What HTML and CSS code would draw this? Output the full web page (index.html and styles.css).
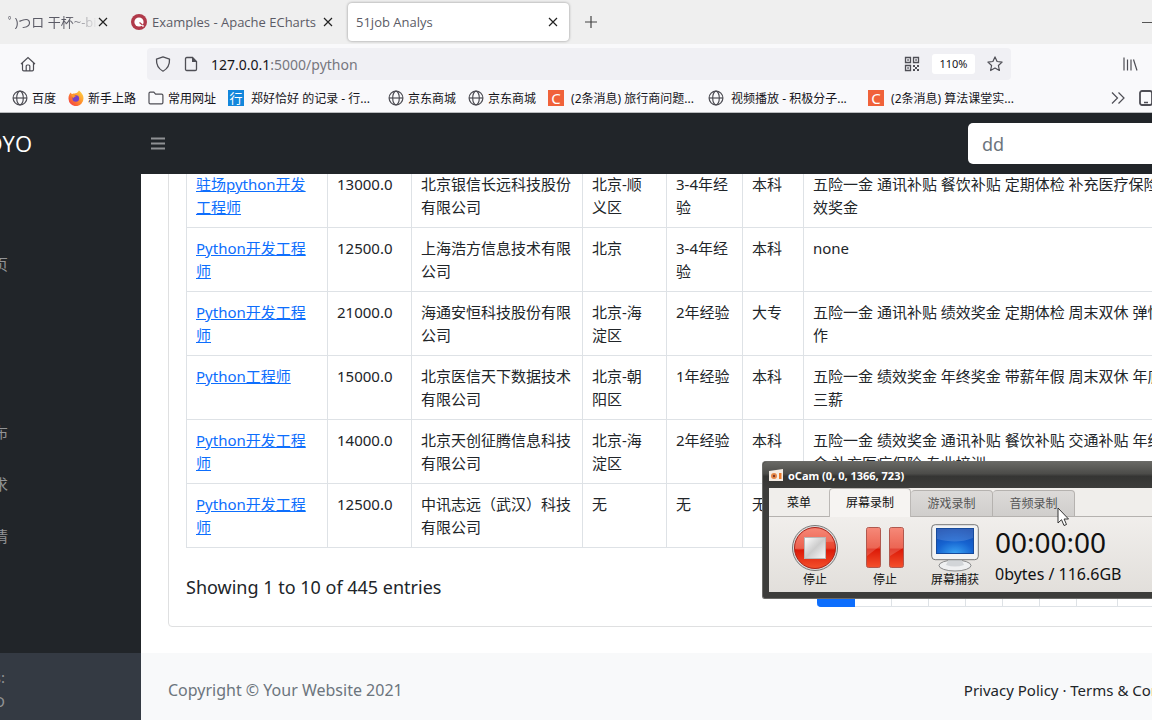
FILE: index.html
```html
<!DOCTYPE html>
<html lang="zh-CN">
<head>
<meta charset="utf-8">
<meta name="viewport" content="width=device-width, initial-scale=1">
<title>51job Analys</title>
<link rel="stylesheet" href="styles.css">
</head>
<body>
<svg class="defs" aria-hidden="true">
  <symbol id="globe" viewBox="0 0 16 16"><g fill="none" stroke="#4e4e55" stroke-width="1.2"><circle cx="8" cy="8" r="6.9"/><ellipse cx="8" cy="8" rx="3.3" ry="6.9"/><path d="M1 8h14"/></g></symbol>
  <symbol id="close" viewBox="0 0 10 10"><path d="M1 1l8 8M9 1L1 9" fill="none" stroke="#222" stroke-width="1.2"/></symbol>
  <linearGradient id="red" x1="0" y1="0" x2="0" y2="1"><stop offset="0" stop-color="#f4705c"/><stop offset=".5" stop-color="#e8452f"/><stop offset=".55" stop-color="#dc1a08"/><stop offset="1" stop-color="#f4502c"/></linearGradient>
  <linearGradient id="steel" x1="0" y1="0" x2="1" y2="1"><stop offset="0" stop-color="#fff"/><stop offset=".5" stop-color="#ccc"/><stop offset="1" stop-color="#fafafa"/></linearGradient>
  <radialGradient id="screen" cx=".5" cy="1" r="1"><stop offset="0" stop-color="#3aa4f4"/><stop offset=".5" stop-color="#1663d0"/><stop offset="1" stop-color="#1048b0"/></radialGradient>
  <linearGradient id="fire" x1="1" y1="0" x2="0" y2="1"><stop offset="0" stop-color="#ffe04a"/><stop offset=".5" stop-color="#ff8a2a"/><stop offset="1" stop-color="#f0304c"/></linearGradient>
</svg>

<header class="browser">
  <div class="tabs">
    <div class="tab tab-first"><span class="tab-title fade">ﾟ)つロ 干杯~-bil</span><button class="x" aria-label="关闭"><svg><use href="#close"/></svg></button></div>
    <div class="tab tab-mid">
      <svg class="ico" viewBox="0 0 16 16"><circle cx="8" cy="8" r="8" fill="#b03a4a"/><circle cx="8" cy="8" r="4.600" fill="#fff"/><path d="M8 8l4.500 4.500" stroke="#fff" stroke-width="1.600"/><path d="M8.500 8.500l3 2.500" stroke="#b03a4a" stroke-width="1.200"/></svg>
      <span class="tab-title">Examples - Apache ECharts</span><button class="x" aria-label="关闭"><svg><use href="#close"/></svg></button></div>
    <div class="tab tab-active"><span class="tab-title">51job Analys</span><button class="x" aria-label="关闭"><svg><use href="#close"/></svg></button></div>
    <button class="newtab" aria-label="新标签页"><svg viewBox="0 0 12 12"><path d="M6 0v12M0 6h12" stroke="#444" stroke-width="1.2"/></svg></button>
    <button class="minimize" aria-label="最小化"></button>
  </div>
  <div class="toolbar">
    <button class="home" aria-label="主页"><svg class="ico" viewBox="0 0 16 16"><path d="M1 8l7-6.500L15 8M2.500 7v6.500c0 .8.5 1.300 1.300 1.300h8.400c.8 0 1.300-.5 1.300-1.300V7M6.200 14.500V10c0-.6.4-1 1-1h1.600c.6 0 1 .4 1 1v4.500" fill="none" stroke="#4e4e55" stroke-width="1.2"/></svg></button>
    <div class="urlbar">
      <svg class="ico" viewBox="0 0 16 16"><path d="M8 .8l6.500 2.300c.3 5.500-1.300 9.300-6.500 12.100C2.800 12.400 1.200 8.600 1.500 3.100z" fill="none" stroke="#4e4e55" stroke-width="1.3" stroke-linejoin="round"/></svg>
      <svg class="ico" viewBox="0 0 16 16"><path d="M3.800 1.500h5.700l4 4v7.700c0 .8-.5 1.300-1.300 1.300H3.800c-.8 0-1.300-.5-1.300-1.300V2.800c0-.8.5-1.300 1.300-1.300z" fill="none" stroke="#4e4e55" stroke-width="1.300"/><path d="M9 1v5h5z" fill="#4e4e55"/></svg>
      <span class="url">127.0.0.1<span class="path">:5000/python</span></span>
      <svg class="ico push" viewBox="0 0 16 16"><g fill="none" stroke="#4e4e55" stroke-width="1.300"><path d="M1.500 1.500h5v5h-5zM9.500 1.500h5v5h-5zM1.500 9.500h5v5h-5z"/></g><path fill="#4e4e55" d="M3.300 3.300h1.500v1.500H3.300zM11.300 3.300h1.500v1.500h-1.500zM3.300 11.300h1.500v1.500H3.300zM9 9h2v2H9zM13 9h2v2h-2zM11 11h2v2h-2zM9 13h2v2H9zM13 13h2v2h-2z"/></svg>
      <button class="zoom">110%</button>
      <svg class="ico" viewBox="0 0 16 16"><path d="M8 .9l2.100 4.600 5 .6-3.700 3.400 1 5L8 12l-4.400 2.500 1-5L.9 6.100l5-.6z" fill="none" stroke="#4e4e55" stroke-width="1.200" stroke-linejoin="round"/></svg>
    </div>
    <button class="library" aria-label="书库"><svg class="ico" viewBox="0 0 16 16"><path d="M2 1.500v13M5.500 3.500v11M9 3.500v11M11.500 3.500l3.500 11" fill="none" stroke="#4e4e55" stroke-width="1.200"/></svg></button>
  </div>
  <nav class="bookmarks">
    <a href="#"><svg class="ico"><use href="#globe"/></svg>百度</a>
    <a href="#"><svg class="ico" viewBox="0 0 16 16"><path d="M11 .5c1.500 1.500 4.700 4 4.500 8a7.500 7.500 0 01-15 .2C.4 6 1.300 3.800 3 2.500c.2 1 .5 1.300 1 1.700C6 3 9 4 11 .5z" fill="url(#fire)"/><circle cx="7.800" cy="8.500" r="3.300" fill="#7442c8"/><path d="M3 5c2-.5 4 .2 5 1.600-1.500 0-2.300.6-2.300 1.700" fill="#ff9a2a"/></svg>新手上路</a>
    <a href="#"><svg class="ico" viewBox="0 0 16 16"><path d="M1 3.500c0-.8.500-1.300 1.300-1.300h3.500l1.800 2h6c.8 0 1.300.5 1.300 1.300v7c0 .8-.5 1.300-1.300 1.300H2.300c-.8 0-1.300-.5-1.300-1.300z" fill="none" stroke="#4e4e55" stroke-width="1.200"/></svg>常用网址</a>
    <a href="#" class="long"><span class="badge blue">行</span>郑好恰好 的记录 - 行...</a>
    <a href="#"><svg class="ico"><use href="#globe"/></svg>京东商城</a>
    <a href="#"><svg class="ico"><use href="#globe"/></svg>京东商城</a>
    <a href="#" class="long"><span class="badge orange">C</span>(2条消息) 旅行商问题...</a>
    <a href="#" class="long"><svg class="ico"><use href="#globe"/></svg>视频播放 - 积极分子...</a>
    <a href="#" class="long"><span class="badge orange">C</span>(2条消息) 算法课堂实...</a>
    <button class="more" aria-label="更多书签"><svg class="ico" viewBox="0 0 16 16"><path d="M2 2.500L7.500 8 2 13.500M8.500 2.500L14 8l-5.500 5.500" fill="none" stroke="#4e4e55" stroke-width="1.200"/></svg></button>
    <button class="phone" aria-label="移动设备书签"><svg class="ico" viewBox="0 0 16 16"><rect x="2" y="1" width="12" height="14" rx="2" fill="none" stroke="#4e4e55" stroke-width="1.800"/><path d="M6 12.500h4" stroke="#4e4e55" stroke-width="1.500"/></svg></button>
  </nav>
</header>

<div class="topnav">
  <a class="brand" href="#">OYO</a>
  <button class="toggle" aria-label="切换菜单"><svg viewBox="0 0 14 13"><path d="M0 1.500h14M0 6.500h14M0 11.500h14" stroke="#8f9194" stroke-width="2.200"/></svg></button>
  <input class="search" type="text" placeholder="dd" aria-label="搜索">
</div>

<div class="page">
  <aside class="sidebar">
    <nav class="menu">
      <a class="home-link" href="#">页</a>
      <a href="#">布</a>
      <a href="#">求</a>
      <a href="#">情</a>
    </nav>
    <div class="user"><span>s:</span><span>O</span></div>
  </aside>
  <main class="main">
    <div class="content">
      <section class="card">
        <table class="jobs">
          <colgroup><col class="c-job"><col class="c-pay"><col class="c-firm"><col class="c-city"><col class="c-exp"><col class="c-edu"><col class="c-perk"></colgroup>
          <tbody>
            <tr><td><a href="#">驻场python开发工程师</a></td><td>13000.0</td><td>北京银信长远科技股份有限公司</td><td class="city">北京-顺义区</td><td>3-4年经验</td><td>本科</td><td>五险一金 通讯补贴 餐饮补贴 定期体检 补充医疗保险 绩效奖金</td></tr>
            <tr><td><a href="#">Python开发工程师</a></td><td>12500.0</td><td>上海浩方信息技术有限公司</td><td class="city">北京</td><td>3-4年经验</td><td>本科</td><td>none</td></tr>
            <tr><td><a href="#">Python开发工程师</a></td><td>21000.0</td><td>海通安恒科技股份有限公司</td><td class="city">北京-海淀区</td><td>2年经验</td><td>大专</td><td>五险一金 通讯补贴 绩效奖金 定期体检 周末双休 弹性工作</td></tr>
            <tr><td><a href="#">Python工程师</a></td><td>15000.0</td><td>北京医信天下数据技术有限公司</td><td class="city">北京-朝阳区</td><td>1年经验</td><td>本科</td><td>五险一金 绩效奖金 年终奖金 带薪年假 周末双休 年底十三薪</td></tr>
            <tr><td><a href="#">Python开发工程师</a></td><td>14000.0</td><td>北京天创征腾信息科技有限公司</td><td class="city">北京-海淀区</td><td>2年经验</td><td>本科</td><td>五险一金 绩效奖金 通讯补贴 餐饮补贴 交通补贴 年终奖金 补充医疗保险 专业培训</td></tr>
            <tr><td><a href="#">Python开发工程师</a></td><td>12500.0</td><td>中讯志远（武汉）科技有限公司</td><td class="city">无</td><td>无</td><td>无</td><td></td></tr>
          </tbody>
        </table>
        <div class="table-foot">
          <span class="info">Showing 1 to 10 of 445 entries</span>
          <div class="pager"><button class="on" aria-label="1"></button><button aria-label="2"></button><button aria-label="3"></button><button aria-label="4"></button><button aria-label="5"></button><button aria-label="6"></button><button aria-label="7"></button><button class="wide" aria-label="45"></button><button class="next" aria-label="Next"></button></div>
        </div>
      </section>
      <footer class="footer">
        <span class="copy">Copyright © Your Website 2021</span>
        <span><a href="#">Privacy Policy</a> · <a href="#">Terms &amp; Conditions</a></span>
      </footer>
    </div>
  </main>
</div>

<section class="ocam">
  <div class="ocam-title"><svg viewBox="0 0 14 12"><path d="M0 2l14-2v12H0z" fill="#f4ece4"/><circle cx="5" cy="7" r="3" fill="#e88a4a"/><circle cx="5" cy="7" r="1.200" fill="#7a3a2a"/><path d="M10 4h2.500v6H10z" fill="#ee7a2a"/></svg>oCam (0, 0, 1366, 723)</div>
  <div class="ocam-body">
    <div class="ocam-tabs"><button class="menu-btn">菜单</button><button class="current">屏幕录制</button><button class="idle">游戏录制</button><button class="idle">音频录制</button></div>
    <div class="ocam-tools">
      <button class="tool"><svg viewBox="0 0 48 48"><circle cx="24" cy="24" r="22.500" fill="#ddd" stroke="#777"/><circle cx="24" cy="24" r="20.500" fill="url(#red)" stroke="#a8241a"/><path d="M4 25C15 28 29 16 43 18A20 20 0 004 25z" fill="#fff" opacity=".16"/><rect x="13.500" y="13.500" width="21" height="21" fill="url(#steel)" stroke="#b8b8b8"/></svg>停止</button>
      <button class="tool"><svg viewBox="0 0 48 48"><g fill="url(#red)" stroke="#b0584e"><rect x="5.500" y="3.500" width="14" height="40" rx="2"/><rect x="28.500" y="3.500" width="14" height="40" rx="2"/></g><path d="M6 4h13v18L6 32zM29 4h13v20l-13 8z" fill="#fff" opacity=".18"/></svg>停止</button>
      <button class="tool"><svg viewBox="0 0 48 48"><path d="M18 34h12l3 6H15z" fill="#c9cdd0"/><ellipse cx="24" cy="41.500" rx="16" ry="5.500" fill="#eff0f1" stroke="#888"/><path d="M18 34h12l3 7q-9 3-18 0z" fill="#d2d5d8"/><rect x=".7" y=".7" width="46.600" height="35" rx="3.500" fill="#f2f3f4" stroke="#777"/><rect x="5.500" y="4.500" width="37" height="25" fill="url(#screen)" stroke="#164a9c"/><path d="M6 5h36v9c-12 5-25 4-36 1z" fill="#fff" opacity=".14"/></svg>屏幕捕获</button>
      <div class="readout"><span class="clock">00:00:00</span><span>0bytes / 116.6GB</span></div>
    </div>
  </div>
  <svg class="cursor" viewBox="0 0 12 20"><path d="M1 1v15l3.500-3.300L7 18.500l2.500-1-2.400-5.500H11.500z" fill="#fff" stroke="#333"/></svg>
</section>
</body>
</html>
```
FILE: styles.css
```css
* { box-sizing: border-box; }
body {
  margin: 0;
  height: 100vh;
  overflow: hidden;
  display: flex;
  flex-direction: column;
  font-family: "Noto Sans", "Noto Sans CJK SC", sans-serif;
  font-size: 15px;
  line-height: 23px;
  color: #212529;
  background: #fff;
  position: relative;
}
button { border: 0; padding: 0; background: none; font: inherit; color: inherit; display: block; }
svg { display: block; }
a { color: inherit; text-decoration: none; }
.defs { position: absolute; width: 0; height: 0; }
.ico { width: 16px; height: 16px; flex: none; }

.browser { flex: none; background: #f9f9fb; border-bottom: 1px solid #b9bbbd; color: #15141a; }
.tabs { display: flex; align-items: center; height: 44px; background: #efefef; color: #5b5b66; font-family: "Open Sans", "Noto Sans CJK SC", sans-serif; font-size: 13px; }
.tab { display: flex; align-items: center; height: 38px; white-space: nowrap; }
.tab-title { flex: 1; overflow: hidden; }
.tab-first { width: 120px; padding: 0 12px 0 8px; }
.tab-mid { width: 228px; padding: 0 15px 0 11px; gap: 5px; }
.tab-active { width: 221px; padding: 0 11px 0 8px; border-radius: 4px; background: #fff; box-shadow: 0 0 3px #0006; }
.fade { mask-image: linear-gradient(to right, #000 60px, #0000 90px); }
.x { width: 10px; height: 10px; flex: none; }
.x svg { width: 10px; height: 10px; }
.newtab { margin-left: 16px; }
.newtab svg { width: 12px; height: 12px; }
.minimize { margin-left: auto; width: 10px; height: 1px; background: #555; }
.toolbar { display: flex; align-items: center; height: 40px; padding: 0 14px 0 20px; }
.urlbar { flex: 1; display: flex; align-items: center; gap: 12px; height: 32px; margin: 0 111px 0 111px; padding: 0 8px 0 8px; background: #f0f0f4; border-radius: 4px; }
.url { font-family: "Noto Sans", sans-serif; font-size: 14px; }
.path { color: #77777f; }
.push { margin-left: auto; }
.zoom { width: 43px; height: 20px; background: #fff; border-radius: 3px; font-size: 11px; line-height: 20px; }
.bookmarks { display: flex; align-items: center; gap: 12px; height: 28px; padding-left: 12px; font-size: 12px; font-family: "Noto Sans", "Noto Sans CJK SC", sans-serif; white-space: nowrap; }
.bookmarks a { display: flex; align-items: center; gap: 4px; flex: none; }
.bookmarks .long { width: 148px; gap: 7px; }
.badge { width: 16px; height: 16px; color: #fff; text-align: center; line-height: 16px; font-size: 13px; }
.blue { background: #1287dc; }
.orange { background: #f0623a; font-size: 15px; }
.more { margin-left: auto; }
.phone { width: 14px; overflow: hidden; }

.topnav { flex: none; display: flex; align-items: center; height: 61px; background: #212529; position: relative; }
.brand { width: 32px; display: flex; justify-content: flex-end; color: #fff; font-size: 22px; font-family: "Open Sans", sans-serif; }
.toggle { margin-left: 119px; }
.toggle svg { width: 14px; height: 13px; }
.search { margin-left: auto; width: 184px; height: 41px; padding: 0 14px; border: 0; border-radius: 5px 0 0 5px; background: #fff; font-family: "Noto Sans", sans-serif; font-size: 18px; color: #212529; }
.search::placeholder { color: #6c757d; opacity: 1; }

.page { flex: 1; min-height: 0; display: flex; }
.sidebar { width: 141px; flex: none; display: flex; flex-direction: column; justify-content: space-between; background: #212529; color: #929496; overflow: hidden; }
.menu { padding-top: 64px; display: flex; flex-direction: column; }
.menu a { width: 8px; height: 52px; line-height: 52px; display: flex; justify-content: flex-end; }
.menu .home-link { margin-bottom: 116px; }
.user { height: 67px; padding-top: 12px; background: #343a43; display: flex; flex-direction: column; line-height: 24px; }
.user span { width: 5px; display: flex; justify-content: flex-end; }

.main { flex: 1; min-width: 0; overflow: hidden; display: flex; flex-direction: column; justify-content: flex-end; }
.content { width: max-content; min-width: 100%; padding-left: 27px; background: linear-gradient(#f8f9fa, #f8f9fa) bottom / 100% 67px no-repeat; }
.card { border: 1px solid #dfe0e1; border-radius: 4px; padding: 0 17px 19px; margin-bottom: 26px; }
.jobs { table-layout: fixed; width: 1003px; border-collapse: collapse; }
.jobs td { height: 64px; padding: 9px 8px 8px 9px; border: 1px solid #dee2e6; vertical-align: top; }
.jobs .city { padding-right: 14px; }
.jobs a { color: #0d6efd; text-decoration: underline; }
.c-job { width: 141px; }
.c-pay { width: 84px; }
.c-firm { width: 171px; }
.c-city { width: 84px; }
.c-exp { width: 76px; }
.c-edu { width: 61px; }
.c-perk { width: 386px; }
.table-foot { display: flex; align-items: center; justify-content: space-between; margin-top: 20px; }
.info { font-size: 18px; }
.pager { display: flex; }
.pager button { width: 37px; height: 39px; border: 1px solid #dee2e6; border-left: 0; color: #0d6efd; }
.pager .on { width: 38px; background: #0d6efd; border-color: #0d6efd; border-radius: 4px 0 0 4px; }
.pager .wide { width: 41px; }
.pager .next { width: 72px; border-radius: 0 4px 4px 0; }
.footer { display: flex; align-items: center; justify-content: space-between; height: 67px; padding-top: 8px; }
.copy { color: #6c757d; font-size: 16px; }

.ocam { position: absolute; left: 762px; right: 0; top: 461px; height: 138px; padding: 0 0 6px 6px; display: flex; flex-direction: column; background: #3d3d3b; border: 1px solid #6b6b68; border-right: 0; border-radius: 4px 0 0 3px; color: #111; }
.ocam-title { flex: none; height: 26px; margin-left: -6px; padding-left: 6px; display: flex; align-items: center; gap: 5px; background: linear-gradient(#686864, #4c4c49 45%, #353533 55%, #3d3d3b); color: #fff; font-family: "Noto Sans", sans-serif; font-weight: bold; font-size: 11px; border-radius: 4px 0 0 0; }
.ocam-title svg { width: 14px; height: 12px; }
.ocam-body { flex: 1; background: linear-gradient(#f6f4f2, #e2dfdb); }
.ocam-tabs { display: flex; height: 29px; background: #f0eeeb; font-size: 12px; line-height: 26px; box-shadow: inset 0 -1px #b5b2af; }
.menu-btn { width: 60px; }
.current { width: 82px; background: #f6f4f2; border: 1px solid #bbb8b5; border-bottom: 0; border-radius: 4px 4px 0 0; }
.idle { width: 82px; margin-top: 2px; background: linear-gradient(#dcdad8, #d0cecc); border: 1px solid #b5b2af; border-left: 0; border-radius: 4px 4px 0 0; color: #555; }
.ocam-tools { display: flex; padding: 7px 0 0 11px; }
.tool { width: 70px; display: flex; flex-direction: column; align-items: center; font-size: 12px; line-height: 16px; }
.tool svg { width: 48px; height: 48px; }
.readout { margin-left: 5px; display: flex; flex-direction: column; font-size: 16px; line-height: 28px; white-space: nowrap; }
.clock { font-size: 28px; line-height: 36px; }
.cursor { position: absolute; left: 294px; top: 45px; width: 12px; height: 20px; }
```
